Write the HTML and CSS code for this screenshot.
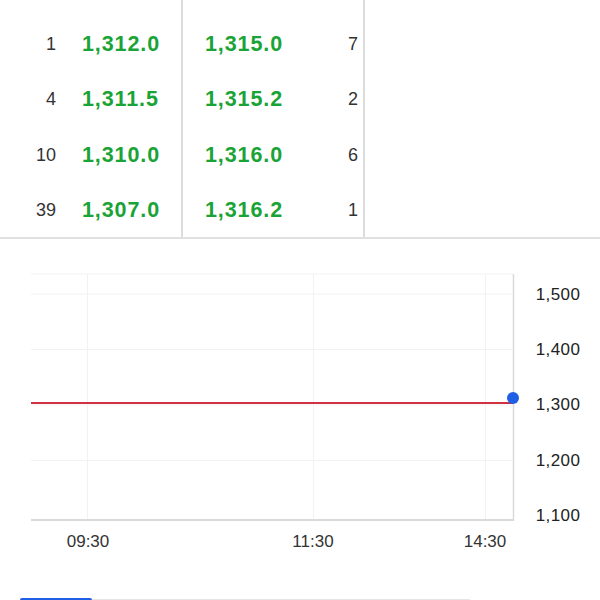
FILE: index.html
```html
<!DOCTYPE html>
<html>
<head>
<meta charset="utf-8">
<link rel="stylesheet" href="styles.css">
</head>
<body>
<div class="book">
  <div class="side bid">
    <div class="row"><span class="qty">1</span><span class="px">1,312.0</span></div>
    <div class="row"><span class="qty">4</span><span class="px">1,311.5</span></div>
    <div class="row"><span class="qty">10</span><span class="px">1,310.0</span></div>
    <div class="row"><span class="qty">39</span><span class="px">1,307.0</span></div>
  </div>
  <div class="side ask">
    <div class="row"><span class="px">1,315.0</span><span class="qty">7</span></div>
    <div class="row"><span class="px">1,315.2</span><span class="qty">2</span></div>
    <div class="row"><span class="px">1,316.0</span><span class="qty">6</span></div>
    <div class="row"><span class="px">1,316.2</span><span class="qty">1</span></div>
  </div>
  <div class="rest"></div>
</div>
<div class="chart">
  <svg class="plot" width="600" height="322" viewBox="0 0 600 322">
    <line x1="31" y1="35" x2="513" y2="35" class="grid"/>
    <line x1="31" y1="55" x2="513" y2="55" class="grid"/>
    <line x1="31" y1="110.5" x2="513" y2="110.5" class="grid"/>
    <line x1="31" y1="166" x2="513" y2="166" class="grid"/>
    <line x1="31" y1="221.5" x2="513" y2="221.5" class="grid"/>
    <line x1="87.5" y1="35" x2="87.5" y2="281" class="grid"/>
    <line x1="313.5" y1="35" x2="313.5" y2="281" class="grid"/>
    <line x1="485.5" y1="35" x2="485.5" y2="281" class="grid"/>
    <line x1="513.5" y1="35" x2="513.5" y2="282" class="axis"/>
    <line x1="31" y1="281" x2="514" y2="281" class="axis axis-b"/>
    <line x1="31" y1="164" x2="513" y2="164" class="price"/>
    <circle cx="513" cy="159" r="6" class="dot"/>
    <text x="558" y="55" class="ylab">1,500</text>
    <text x="558" y="110" class="ylab">1,400</text>
    <text x="558" y="165" class="ylab">1,300</text>
    <text x="558" y="221" class="ylab">1,200</text>
    <text x="558" y="276" class="ylab">1,100</text>
    <text x="88" y="302" class="xlab">09:30</text>
    <text x="313" y="302" class="xlab">11:30</text>
    <text x="485" y="302" class="xlab">14:30</text>
  </svg>
</div>
<div class="tabs">
  <div class="track"><div class="thumb"></div></div>
</div>
</body>
</html>
```
FILE: styles.css
```css
html, body {
  margin: 0;
  padding: 0;
  background: #fff;
  font-family: "Liberation Sans", Arial, sans-serif;
}
.book {
  display: flex;
  height: 237px;
  border-bottom: 2px solid #e0e0e0;
}
.side {
  padding-top: 17px;
  box-sizing: border-box;
}
.row {
  height: 55.25px;
  display: flex;
  align-items: center;
}
.bid {
  width: 183px;
  border-right: 2px solid #dcdcdc;
}
.bid .qty {
  width: 56px;
  text-align: right;
}
.bid .px {
  margin-left: 26px;
}
.ask {
  width: 182px;
  padding-left: 22px;
  padding-right: 5px;
  border-right: 2px solid #dcdcdc;
}
.ask .row {
  justify-content: space-between;
}
.rest {
  flex: 1;
}
.qty {
  font-size: 18px;
  color: #333;
}
.px {
  font-size: 21.5px;
  font-weight: bold;
  color: #1aa336;
  letter-spacing: 0.9px;
}
.chart {
  height: 322px;
}
.plot {
  display: block;
}
.grid {
  stroke: #f2f2f2;
  stroke-width: 1;
}
.axis {
  stroke: #dadada;
  stroke-width: 1.5;
}
.axis-b {
  stroke-width: 2;
}
.price {
  stroke: #d03040;
  stroke-width: 2;
}
.dot {
  fill: #1f5fe6;
}
.ylab {
  font-family: "Liberation Sans", Arial, sans-serif;
  font-size: 17px;
  letter-spacing: 0.4px;
  fill: #222;
  text-anchor: middle;
  dominant-baseline: central;
}
.xlab {
  font-family: "Liberation Sans", Arial, sans-serif;
  font-size: 17px;
  fill: #333;
  text-anchor: middle;
  dominant-baseline: central;
}
.tabs {
  padding: 37px 0 0 20px;
}
.track {
  width: 450px;
  height: 2px;
  margin-top: 1px;
  background: #e6e6e6;
  position: relative;
}
.thumb {
  position: absolute;
  left: 0;
  top: -1px;
  width: 72px;
  height: 4px;
  border-radius: 2px 2px 0 0;
  background: #1f5fe6;
}
```
